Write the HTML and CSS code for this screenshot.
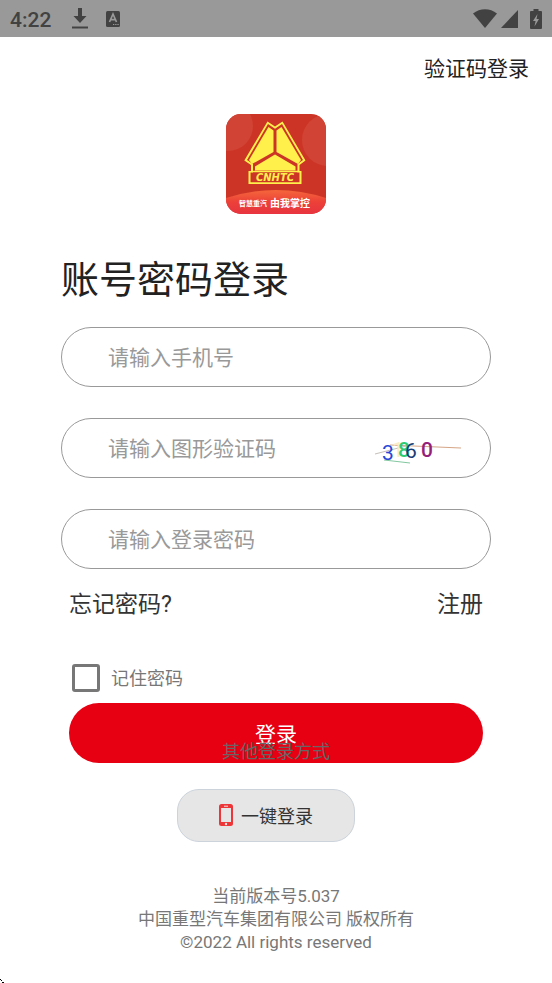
FILE: index.html
```html
<!DOCTYPE html>
<html lang="zh-CN">
<head>
  <meta charset="UTF-8">
  <meta name="viewport" content="width=device-width, initial-scale=1.0">
  <title>账号密码登录</title>
  <link rel="stylesheet" href="styles.css">
</head>
<body>
  <header class="status-bar">
    <span class="time">4:22</span>
    <svg class="icon-download" width="16" height="21" viewBox="0 0 16 21" fill="#424242">
      <path d="M6 0h4v8h4.500L8 15 1.500 8H6z"/>
      <path d="M0 18.500h16v2H0z"/>
    </svg>
    <svg class="icon-app" width="14" height="16" viewBox="0 0 14 16">
      <rect width="14" height="16" rx="1.500" fill="#424242"/>
      <path d="M3.500 11L7 3l3.500 8M4.800 8.600h4.400" fill="none" stroke="#999" stroke-width="1.700"/>
      <path d="M7 13.500h1.300M9.200 13.500h1.300M11.400 13.500h1.300" stroke="#999"/>
    </svg>
    <div class="status-right">
      <svg width="24" height="19" viewBox="0 0 24 19" fill="#424242">
        <path d="M0 4.500C7-1.200 17-1.200 24 4.500L12 19z"/>
      </svg>
      <svg width="17" height="18" viewBox="0 0 17 18" fill="#424242">
        <path d="M17 0v18H0z"/>
      </svg>
      <svg class="icon-battery" width="12" height="20" viewBox="0 0 12 20">
        <path d="M3.500 0h5v2H11a1 1 0 0 1 1 1v16a1 1 0 0 1-1 1H1a1 1 0 0 1-1-1V3a1 1 0 0 1 1-1h2.500z" fill="#424242"/>
        <path d="M7.500 5L3 12h2.600L4.500 17.500 9 10H6.500z" fill="#999"/>
      </svg>
    </div>
  </header>

  <nav class="top-nav">
    <a href="#">验证码登录</a>
  </nav>

  <main class="login">
    <svg class="logo" width="100" height="100" viewBox="0 0 100 100" role="img" aria-label="CNHTC">
      <defs>
        <clipPath id="logoClip"><rect width="100" height="100" rx="15"/></clipPath>
        <linearGradient id="logoFoot" x1="0" y1="0" x2="0" y2="1">
          <stop offset="0" stop-color="#f5673c"/>
          <stop offset=".5" stop-color="#ec4038"/>
          <stop offset="1" stop-color="#e83440"/>
        </linearGradient>
      </defs>
      <g clip-path="url(#logoClip)">
        <rect width="100" height="100" fill="#cc3526"/>
        <circle cx="2" cy="12" r="25" fill="#d14334"/>
        <circle cx="102" cy="26" r="26" fill="#d14334"/>
        <path d="M0 84Q50 68 100 84v16H0z" fill="url(#logoFoot)"/>
        <path d="M41.500 7.500L49 12.500 56.500 7.500 79.500 46.500 73.500 51V57H75.500V70H22.500V57H25V51L18.300 46.500z" fill="#fff04b"/>
        <path d="M42 10L49 14.800 56 10 77 46 71.500 50V58.500H73.500V68.300H24.500V58.500H27V50L21 46z" fill="#cc3526"/>
        <path d="M42.500 13L47.500 16.500V38L26 50 23 46z" fill="#fff04b"/>
        <path d="M55.500 13L50.500 16.500V38L72 50 75 46z" fill="#fff04b"/>
        <path d="M49 40.500L69.500 52.500V56.500H29V52.500z" fill="#fff04b"/>
        <path d="M25.500 57.500H72.500" stroke="#fff04b" stroke-width="1.500"/>
        <text class="logo-name" x="49" y="67">CNHTC</text>
        <text class="logo-small" x="13" y="92">智慧重汽</text>
        <text class="logo-slogan" x="44" y="93">由我掌控</text>
      </g>
    </svg>

    <h1>账号密码登录</h1>

    <form class="login-form">
      <div class="field">
        <input type="tel" aria-label="手机号" placeholder="请输入手机号">
      </div>
      <div class="field">
        <input type="text" aria-label="图形验证码" placeholder="请输入图形验证码">
        <svg class="captcha" width="90" height="36" viewBox="0 0 90 36">
          <path d="M3 23L34 15" stroke="#aaa29a" stroke-width=".7"/>
          <path d="M18 14L89 17" stroke="#c98e66" stroke-width=".8"/>
          <path d="M12 29L38 32" stroke="#62b987" stroke-width=".8"/>
          <text x="20" y="26" fill="#faedc8">1</text>
          <text x="10" y="29" fill="#2746d8">3</text>
          <text class="bold" x="26" y="26" fill="#2ecb72">8</text>
          <text x="33" y="27" fill="#173d78">6</text>
          <text class="bold" x="49" y="26" fill="#95207a">0</text>
        </svg>
      </div>
      <div class="field">
        <input type="password" aria-label="登录密码" placeholder="请输入登录密码">
      </div>

      <div class="links">
        <a href="#">忘记密码?</a>
        <a href="#">注册</a>
      </div>

      <label class="remember">
        <input type="checkbox">
        <span>记住密码</span>
      </label>

      <button class="submit" type="submit">登录</button>
    </form>

    <p class="other">其他登录方式</p>

    <button class="one-key" type="button">
      <svg width="14" height="22" viewBox="0 0 14 22">
        <rect width="14" height="22" rx="2.500" fill="#ee3537"/>
        <rect x="2" y="4" width="10" height="14" fill="#e6e6e6"/>
        <path d="M5 2.200h4" stroke="#e6e6e6"/>
        <circle cx="7" cy="20" r="1.200" fill="#e6e6e6"/>
      </svg>
      一键登录
    </button>
  </main>

  <footer class="footer">
    <p>当前版本号5.037</p>
    <p>中国重型汽车集团有限公司 版权所有</p>
    <p>©2022 All rights reserved</p>
  </footer>

  <svg class="corner" width="4" height="4" viewBox="0 0 4 4" shape-rendering="crispEdges">
    <path d="M0 0h1v1H0zM1 1h1v1H1zM2 3h2v1H2z"/>
  </svg>
</body>
</html>
```
FILE: styles.css
```css
* {
  box-sizing: border-box;
}
body {
  margin: 0;
  background: #fff;
  color: #222;
  font-family: Roboto, 'Noto Sans CJK SC', sans-serif;
}
a {
  color: inherit;
  text-decoration: none;
}
.status-bar {
  display: flex;
  align-items: center;
  height: 37px;
  padding: 0 10px;
  background: #999;
  color: #424242;
}
.time {
  padding-top: 2px;
  font-size: 21px;
  font-weight: 500;
}
.icon-download {
  margin-left: 21px;
}
.icon-app {
  margin-left: 18px;
}
.status-right {
  display: flex;
  align-items: center;
  gap: 4px;
  margin-left: auto;
}
.icon-battery {
  margin-left: 8px;
}
.top-nav {
  display: flex;
  justify-content: flex-end;
  padding: 17px 23px 0;
  font-size: 21px;
  line-height: 30px;
}
.login {
  display: flex;
  flex-direction: column;
  align-items: center;
  padding: 30px 61px 0;
}
.logo {
  display: block;
}
.logo text {
  fill: #fff;
}
.logo .logo-name {
  font-family: 'DejaVu Sans', sans-serif;
  font-size: 10px;
  font-weight: bold;
  font-style: italic;
  fill: #fff04b;
  text-anchor: middle;
}
.logo-small {
  font-size: 7px;
  font-weight: bold;
}
.logo-slogan {
  font-size: 10px;
  font-weight: bold;
}
h1 {
  align-self: stretch;
  margin: 38px 0 18px;
  font-size: 38px;
  font-weight: 400;
  line-height: 57px;
}
.login-form {
  align-self: stretch;
}
.field {
  display: flex;
  align-items: center;
  height: 60px;
  margin-bottom: 31px;
  padding: 1px 28px 0 46px;
  border: 1px solid #999;
  border-radius: 30px;
}
.field input {
  flex: 1;
  min-width: 0;
  padding: 0;
  border: none;
  outline: none;
  background: none;
  font-family: inherit;
  font-size: 21px;
  line-height: 30px;
}
.field input::placeholder {
  color: #999;
  opacity: 1;
}
.captcha {
  flex: none;
  font-size: 21px;
}
.captcha .bold {
  font-weight: 500;
}
.links {
  display: flex;
  justify-content: space-between;
  margin-top: -13px;
  padding: 0 8px;
  color: #333;
  font-size: 23px;
  line-height: 36px;
}
.remember {
  display: flex;
  align-items: center;
  gap: 11px;
  width: fit-content;
  margin: 39px 0 9px;
  padding-left: 11px;
  color: #777;
  font-size: 18px;
  line-height: 30px;
}
.remember span {
  padding-top: 2px;
}
.remember input {
  appearance: none;
  width: 28px;
  height: 28px;
  margin: 0;
  border: 3px solid #777;
  border-radius: 3px;
}
.remember input:checked {
  background: #e60012;
}
.submit {
  display: block;
  width: calc(100% - 16px);
  height: 60px;
  margin: 0 8px;
  border: none;
  border-radius: 30px;
  background: #e60012;
  color: #fff;
  font-family: inherit;
  font-size: 21px;
}
.other {
  position: relative;
  margin: -25px 0 24px;
  color: #666;
  font-size: 18px;
  line-height: 27px;
}
.one-key {
  display: flex;
  align-items: center;
  justify-content: center;
  gap: 8px;
  width: 178px;
  height: 53px;
  margin-right: 20px;
  padding-bottom: 2px;
  border: 1px solid #ccd3db;
  border-radius: 22px;
  background: #e6e6e6;
  color: #333;
  font-family: inherit;
  font-size: 18px;
}
.footer {
  padding-top: 43px;
  color: #777;
  font-size: 17px;
  line-height: 23px;
  text-align: center;
}
.footer p {
  margin: 0;
}
.corner {
  position: absolute;
  left: 0;
  bottom: 0;
}
```
